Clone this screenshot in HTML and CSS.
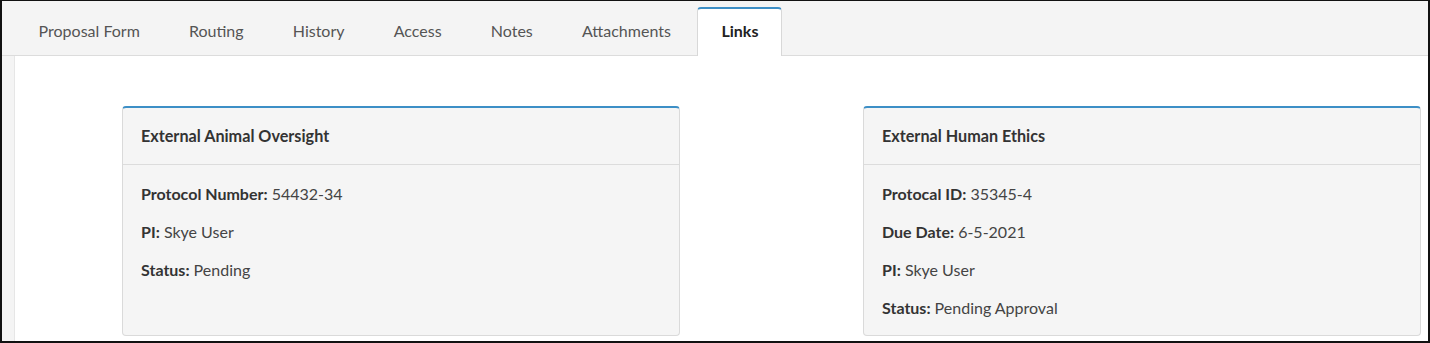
FILE: index.html
```html
<!DOCTYPE html>
<html>
<head>
<meta charset="utf-8">
<link rel="stylesheet" href="styles.css">
</head>
<body>
<div class="frame">
  <nav class="tabs">
    <a class="tab">Proposal Form</a>
    <a class="tab">Routing</a>
    <a class="tab">History</a>
    <a class="tab">Access</a>
    <a class="tab">Notes</a>
    <a class="tab">Attachments</a>
    <a class="tab active">Links</a>
  </nav>
  <main class="content">
    <section class="card">
      <header class="card-head">External Animal Oversight</header>
      <div class="card-body">
        <p><b>Protocol Number:</b> 54432-34</p>
        <p><b>PI:</b> Skye User</p>
        <p><b>Status:</b> Pending</p>
      </div>
    </section>
    <section class="card">
      <header class="card-head">External Human Ethics</header>
      <div class="card-body">
        <p><b>Protocal ID:</b> 35345-4</p>
        <p><b>Due Date:</b> 6-5-2021</p>
        <p><b>PI:</b> Skye User</p>
        <p><b>Status:</b> Pending Approval</p>
      </div>
    </section>
  </main>
</div>
</body>
</html>
```

FILE: styles.css
```css
* { box-sizing: border-box; }
html, body { margin: 0; padding: 0; background: #fff; }
body {
  font-family: Lato, "Open Sans", "Liberation Sans", sans-serif;
  color: #333;
}
.frame {
  width: 1430px;
  height: 343px;
  border-style: solid;
  border-color: #111;
  border-width: 1px 2px 2px 2px;
  background: #f4f4f4;
  display: flex;
  flex-direction: column;
  overflow: hidden;
}
.tabs {
  display: flex;
  align-items: flex-end;
  height: 55px;
  padding-left: 12px;
  border-bottom: 1px solid #dcdcdc;
  flex-shrink: 0;
}
.tab {
  display: flex;
  align-items: center;
  height: 48px;
  padding: 0 23.6px 5px;
  font-size: 16px;
  color: #555;
  border: 1px solid transparent;
  border-bottom: none;
  margin-bottom: -1px;
}
.tab.active {
  background: #fff;
  border-color: #d8d8d8;
  border-top: 2px solid #3d8fc6;
  border-radius: 4px 4px 0 0;
  height: 49px;
  color: #222;
  font-weight: 700;
  padding: 0 23px 4px;
  margin-left: 2px;
}
.content {
  flex: 1;
  margin-left: 12px;
  background: #fff;
  border-left: 1px solid #e6e6e6;
  display: flex;
  align-items: flex-start;
  gap: 183px;
  padding: 50px 0 0 107px;
}
.card {
  width: 558px;
  min-height: 230px;
  background: #f5f5f5;
  border: 1px solid #dadada;
  border-top: 2px solid #3d8fc6;
  border-radius: 4px;
  display: flex;
  flex-direction: column;
}
.card-head {
  height: 57px;
  display: flex;
  align-items: center;
  padding: 0 18px 2px;
  font-weight: 700;
  font-size: 16.2px;
  color: #333;
  border-bottom: 1px solid #dcdcdc;
}
.card-body {
  padding: 19px 18px 16px;
  display: flex;
  flex-direction: column;
  gap: 18px;
}
.card-body p {
  margin: 0;
  line-height: 20px;
  font-size: 16px;
  color: #444;
}
.card-body b { color: #333; font-weight: 700; }
```
